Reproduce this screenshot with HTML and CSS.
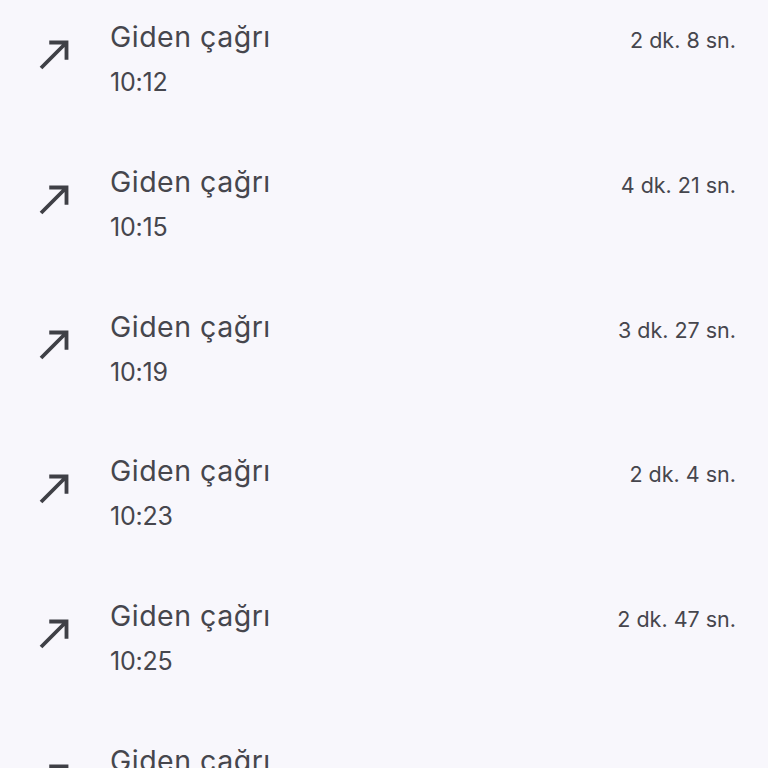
FILE: index.html
```html
<!DOCTYPE html>
<html lang="tr">
<head>
<meta charset="utf-8">
<link rel="stylesheet" href="styles.css">
</head>
<body>
<ul class="calls">
  <li class="call">
    <svg class="icon" viewBox="0 0 24 24"><path d="M9 5v2h6.59L4 18.59 5.41 20 17 8.41V15h2V5z"/></svg>
    <div class="info"><div class="title">Giden çağrı</div><div class="time">10:12</div></div>
    <div class="dur">2 dk. 8 sn.</div>
  </li>
  <li class="call">
    <svg class="icon" viewBox="0 0 24 24"><path d="M9 5v2h6.59L4 18.59 5.41 20 17 8.41V15h2V5z"/></svg>
    <div class="info"><div class="title">Giden çağrı</div><div class="time">10:15</div></div>
    <div class="dur">4 dk. 21 sn.</div>
  </li>
  <li class="call">
    <svg class="icon" viewBox="0 0 24 24"><path d="M9 5v2h6.59L4 18.59 5.41 20 17 8.41V15h2V5z"/></svg>
    <div class="info"><div class="title">Giden çağrı</div><div class="time">10:19</div></div>
    <div class="dur">3 dk. 27 sn.</div>
  </li>
  <li class="call">
    <svg class="icon" viewBox="0 0 24 24"><path d="M9 5v2h6.59L4 18.59 5.41 20 17 8.41V15h2V5z"/></svg>
    <div class="info"><div class="title">Giden çağrı</div><div class="time">10:23</div></div>
    <div class="dur">2 dk. 4 sn.</div>
  </li>
  <li class="call">
    <svg class="icon" viewBox="0 0 24 24"><path d="M9 5v2h6.59L4 18.59 5.41 20 17 8.41V15h2V5z"/></svg>
    <div class="info"><div class="title">Giden çağrı</div><div class="time">10:25</div></div>
    <div class="dur">2 dk. 47 sn.</div>
  </li>
  <li class="call">
    <svg class="icon" viewBox="0 0 24 24"><path d="M9 5v2h6.59L4 18.59 5.41 20 17 8.41V15h2V5z"/></svg>
    <div class="info"><div class="title">Giden çağrı</div></div>
  </li>
</ul>
</body>
</html>
```
FILE: styles.css
```css
html, body {
  margin: 0;
  padding: 0;
  background: #f8f7fc;
  height: 768px;
  overflow: hidden;
}
body {
  font-family: Inter, Roboto, "Liberation Sans", sans-serif;
  color: #46464d;
}
.calls {
  list-style: none;
  margin: 0;
  padding: 0;
}
.call {
  display: flex;
  align-items: flex-start;
  height: 144.75px;
  box-sizing: border-box;
  padding: 20px 32px 0 32px;
}
.icon {
  width: 46px;
  height: 46px;
  margin-top: 11px;
  fill: #3f4046;
  flex: none;
}
.info {
  flex: 1;
  margin-left: 32px;
}
.title {
  font-size: 28.5px;
  line-height: 34px;
  letter-spacing: 0.5px;
  margin-bottom: 11px;
}
.time {
  font-size: 25px;
  line-height: 34px;
  letter-spacing: -0.2px;
}
.dur {
  font-size: 21.5px;
  line-height: 34px;
  padding-top: 3px;
}
```
